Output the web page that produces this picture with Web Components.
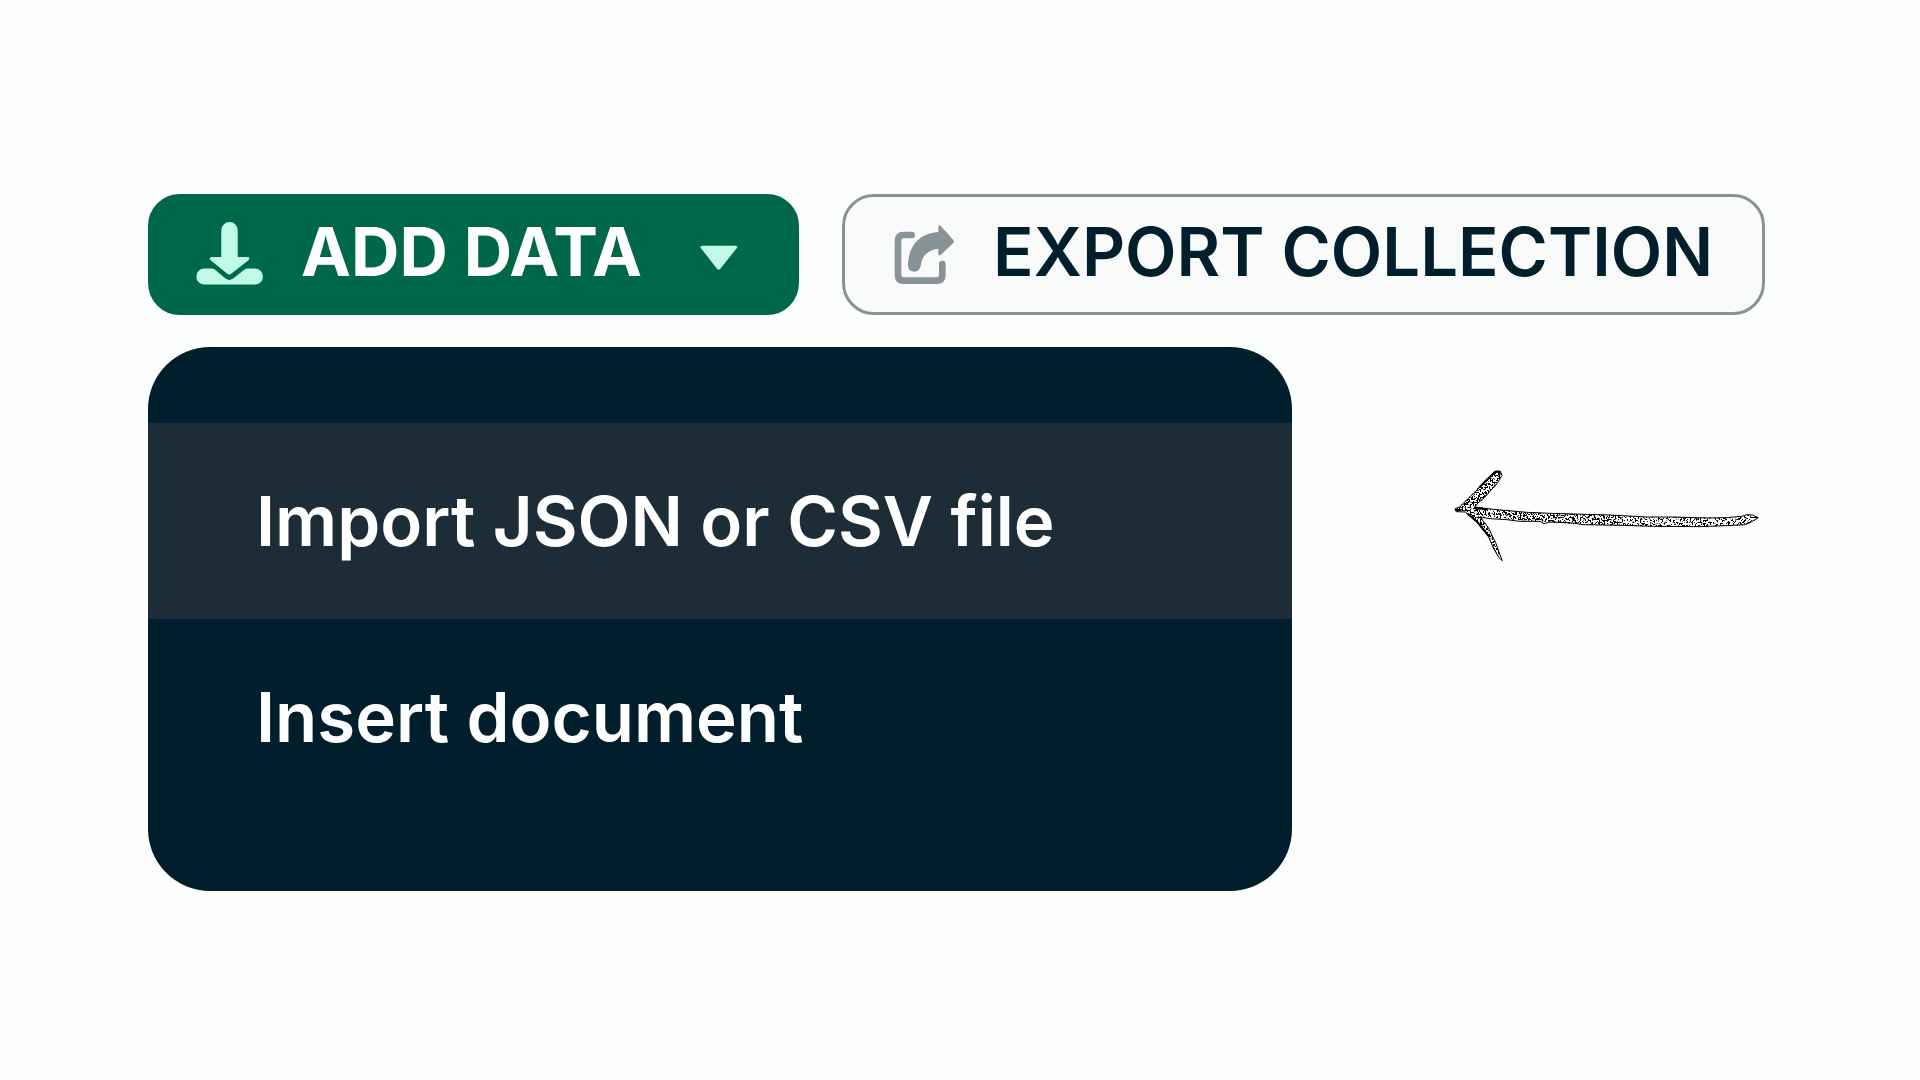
<!DOCTYPE html>
<html lang="en">
<head>
<meta charset="utf-8">
<meta name="viewport" content="width=device-width, initial-scale=1">
<title>Add data</title>
<style>
  body {
    margin: 0;
    background: #fdfefe;
    font-family: Inter, "Liberation Sans", sans-serif;
  }
</style>
</head>
<body>
<collection-page></collection-page>

<template id="tpl-page">
  <style>
    :host { display: block; padding: 194px 156px 189px 148px; }
    nav { display: flex; gap: 43px; margin-bottom: 32px; }
    section { display: flex; align-items: flex-start; gap: 162px; }
    action-menu { flex: 1; }
    sketch-arrow { flex: none; margin-top: 122px; }
  </style>
  <nav>
    <tool-button variant="primary">
      <svg slot="icon" width="67" height="66" viewBox="165 121.5 207 204" fill="#c0fae6" aria-hidden="true">
        <path d="M243 147a25.500 25.500 0 0 1 51 0V230H323Q335 231 327 240L275 281Q268 287 261 281L210 240Q203 231 214 230H243Z"/>
        <path d="M191 265H214Q219 265 223 268L256 296Q268 305 280 296L315 268Q319 265 324 265H347a25 25 0 0 1 0 50H191a25 25 0 0 1 0-50Z"/>
      </svg>
      ADD DATA
      <svg slot="caret" width="38" height="31" viewBox="717 177 114 93" fill="#c0fae6" aria-hidden="true">
        <path d="M723 197H824Q832 198 827 205L778 266Q773 272 768 266L720 205Q716 198 723 197Z"/>
      </svg>
    </tool-button>
    <tool-button variant="outline">
      <svg slot="icon" width="61" height="62" viewBox="225 130 183 186" fill="#889397" aria-hidden="true">
        <path d="M278 163H254Q237 163 237 180V284Q237 300 254 300H353Q370 300 370 284V250" fill="none" stroke="#889397" stroke-width="20" stroke-linecap="round"/>
        <path d="M358 138Q359 132 365 136L403 178Q406 182 403 187L365 223Q359 227 358 220V204C330 207 309 222 305 256Q302 273 285 273Q267 272 267 253C269 190 305 157 358 154Z"/>
      </svg>
      EXPORT COLLECTION
    </tool-button>
  </nav>
  <section>
    <action-menu>
      <menu-entry active>Import JSON or CSV file</menu-entry>
      <menu-entry>Insert document</menu-entry>
    </action-menu>
    <sketch-arrow></sketch-arrow>
  </section>
</template>

<template id="tpl-button">
  <style>
    :host { display: block; flex: none; }
    button {
      display: flex; align-items: center; gap: 38px;
      box-sizing: border-box; height: 121px; margin: 0;
      padding: 0 45px;
      border: 3px solid #00684a; border-radius: 32px;
      background: #00684a; color: #fff;
      font: 700 67px/82px Inter, "Liberation Sans", sans-serif;
      white-space: nowrap; cursor: pointer;
    }
    :host([variant="primary"]) button { padding-right: 58px; }
    :host([variant="outline"]) button {
      padding-left: 49px; padding-right: 49px;
      border-color: #889397; background: #f9fbfa; color: #001e2b;
      font-weight: 600;
    }
    span { padding-bottom: 6px; }
    ::slotted(svg) { display: block; flex: none; }
    ::slotted([slot="caret"]) { margin-left: 20px; }
  </style>
  <button type="button"><slot name="icon"></slot><span><slot></slot></span><slot name="caret"></slot></button>
</template>

<template id="tpl-menu">
  <style>
    :host { display: block; }
    div {
      padding: 76px 0; border-radius: 62px;
      background: #001e2b; overflow: hidden;
    }
  </style>
  <div role="menu"><slot></slot></div>
</template>

<template id="tpl-entry">
  <style>
    :host { display: block; }
    button {
      display: block; width: 100%; margin: 0; border: 0;
      padding: 56px 108px;
      background: transparent; color: #fff; text-align: left;
      font: 600 69px/84px Inter, "Liberation Sans", sans-serif;
      cursor: pointer;
    }
    :host([active]) button { background: #1c2d38; }
  </style>
  <button type="button" role="menuitem"><slot></slot></button>
</template>

<template id="tpl-arrow">
  <style>
    :host { display: block; }
    svg { display: block; }
  </style>
  <svg width="310" height="94" viewBox="42 57 930 282" aria-hidden="true">
    <defs>
      <filter id="grain" x="0" y="0" width="1" height="1" color-interpolation-filters="sRGB">
        <feTurbulence type="fractalNoise" baseFrequency="0.2" numOctaves="2" seed="4"/>
        <feColorMatrix values="0 0 0 0 0  0 0 0 0 0  0 0 0 0 0  24 0 0 0 -12"/>
        <feComposite in2="SourceAlpha" operator="in"/>
      </filter>
      <filter id="grain-light" x="0" y="0" width="1" height="1" color-interpolation-filters="sRGB">
        <feTurbulence type="fractalNoise" baseFrequency="0.2" numOctaves="2" seed="9"/>
        <feColorMatrix values="0 0 0 0 0  0 0 0 0 0  0 0 0 0 0  24 0 0 0 -13"/>
        <feComposite in2="SourceAlpha" operator="in"/>
      </filter>
    </defs>
    <path filter="url(#grain)" d="M46 176L70 160L120 108Q150 78 165 64Q185 60 186 76L168 105L138 138L105 170L160 178L260 187L400 192L545 196V226L430 224L330 216L200 208L122 198L148 238L166 275L187 332L160 294L145 258L110 215L76 186L50 185Z"/>
    <path filter="url(#grain-light)" d="M545 196L620 201L860 203L905 199L935 194L955 203L930 220L900 226L780 230L640 230L545 226Z"/>
    <g fill="none" stroke="#000" stroke-linejoin="round" stroke-linecap="round">
      <path stroke-width="3" d="M46 176L58 172L70 160L92 138L105 127L120 108Q146 80 165 64Q183 59 186 76L178 90L168 105L155 118L138 138L115 158L104 171L160 178L260 187L330 190L400 192L510 195L545 197L620 201L700 201L800 204L860 203L905 199L920 194L938 195L955 203L930 218L914 224L880 226L780 230L640 229L545 226L430 224L400 219L330 216L312 221L300 214L240 214L200 209L150 206L119 201L134 218L148 238L157 260L166 275L176 304L187 332L176 322L160 294L145 258L127 235L110 215L92 200L76 186L50 185Z"/>
      <path stroke-width="6" d="M120 110L165 66L180 65M48 180H62M104 174L140 178M84 192L112 216L146 258"/>
    </g>
  </svg>
</template>

<script>
  const define = (name, templateId) => {
    customElements.define(name, class extends HTMLElement {
      constructor() {
        super();
        const tpl = document.getElementById(templateId);
        this.attachShadow({ mode: 'open' }).append(tpl.content.cloneNode(true));
      }
    });
  };
  define('tool-button', 'tpl-button');
  define('menu-entry', 'tpl-entry');
  define('action-menu', 'tpl-menu');
  define('sketch-arrow', 'tpl-arrow');
  define('collection-page', 'tpl-page');
</script>
</body>
</html>
